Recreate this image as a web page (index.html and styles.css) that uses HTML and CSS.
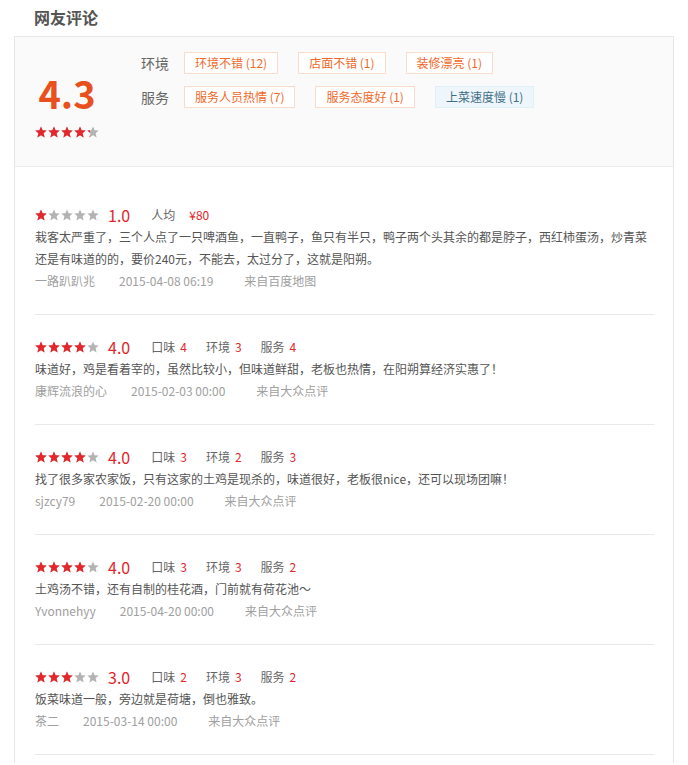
FILE: index.html
```html
<!DOCTYPE html>
<html lang="zh-CN">
<head>
  <meta charset="UTF-8" />
  <title>网友评论</title>
  <link rel="stylesheet" href="styles.css">
</head>
<body>
  <h2 class="section-title">网友评论</h2>

  <div class="review-box">
    <div class="summary">
      <div class="score-col">
        <div class="score-big">4.3</div>
        <div class="stars-holder" data-score="4.3"></div>
      </div>
      <div class="tag-rows">
        <div class="tag-row">
          <span class="tag-label">环境</span>
          <span class="tag">环境不错 (12)</span>
          <span class="tag">店面不错 (1)</span>
          <span class="tag">装修漂亮 (1)</span>
        </div>
        <div class="tag-row">
          <span class="tag-label">服务</span>
          <span class="tag">服务人员热情 (7)</span>
          <span class="tag">服务态度好 (1)</span>
          <span class="tag tag-bad">上菜速度慢 (1)</span>
        </div>
      </div>
    </div>

    <ul class="review-list" id="review-list">
      <!-- JS로 채움 -->
    </ul>
  </div>

  <script>
    const reviews = [
      {
        score: 1.0, price: "¥80",
        text: "栽客太严重了，三个人点了一只啤酒鱼，一直鸭子，鱼只有半只，鸭子两个头其余的都是脖子，西红柿蛋汤，炒青菜还是有味道的的，要价240元，不能去，太过分了，这就是阳朔。",
        user: "一路趴趴兆", time: "2015-04-08 06:19", from: "来自百度地图"
      },
      {
        score: 4.0, taste: 4, env: 3, service: 4,
        text: "味道好，鸡是看着宰的，虽然比较小，但味道鲜甜，老板也热情，在阳朔算经济实惠了！",
        user: "康辉流浪的心", time: "2015-02-03 00:00", from: "来自大众点评"
      },
      {
        score: 4.0, taste: 3, env: 2, service: 3,
        text: "找了很多家农家饭，只有这家的土鸡是现杀的，味道很好，老板很nice，还可以现场团嘛！",
        user: "sjzcy79", time: "2015-02-20 00:00", from: "来自大众点评"
      },
      {
        score: 4.0, taste: 3, env: 3, service: 2,
        text: "土鸡汤不错，还有自制的桂花酒，门前就有荷花池～",
        user: "Yvonnehyy", time: "2015-04-20 00:00", from: "来自大众点评"
      },
      {
        score: 3.0, taste: 2, env: 3, service: 2,
        text: "饭菜味道一般，旁边就是荷塘，倒也雅致。",
        user: "茶二", time: "2015-03-14 00:00", from: "来自大众点评"
      }
    ];

    const starSvg = '<svg class="star" viewBox="0 0 12 12"><polygon points="6,0.4 7.6,4.2 11.7,4.5 8.6,7.2 9.6,11.4 6,9.2 2.4,11.4 3.4,7.2 0.3,4.5 4.4,4.2"/></svg>';

    function starsHtml(score) {
      const five = starSvg.repeat(5);
      return `<span class="stars"><span class="stars-off">${five}</span>` +
        `<span class="stars-on" style="width:${score / 5 * 100}%">${five}</span></span>`;
    }

    document.querySelectorAll(".stars-holder").forEach(el => {
      el.innerHTML = starsHtml(parseFloat(el.dataset.score));
    });

    const list = document.getElementById("review-list");
    reviews.forEach(r => {
      let extra = "";
      if (r.price) {
        extra = `<span class="sub">人均<em class="price">${r.price}</em></span>`;
      } else {
        extra = `<span class="sub">口味<em>${r.taste}</em></span>` +
          `<span class="sub">环境<em>${r.env}</em></span>` +
          `<span class="sub">服务<em>${r.service}</em></span>`;
      }
      const li = document.createElement("li");
      li.className = "review-item";
      li.innerHTML = `
        <div class="score-row">${starsHtml(r.score)}<span class="score">${r.score.toFixed(1)}</span>${extra}</div>
        <p class="review-text">${r.text}</p>
        <div class="meta"><span>${r.user}</span><span class="time">${r.time}</span><span>${r.from}</span></div>
      `;
      list.appendChild(li);
    });
  </script>
</body>
</html>
```

FILE: styles.css
```css
body {
  font-family: 'Noto Sans CJK SC', 'Liberation Sans', sans-serif;
  background-color: #fff;
  color: #555;
  margin: 0;
}

.section-title {
  margin: 0 0 9px;
  padding: 7px 0 0 34px;
  font-size: 16px;
  line-height: 20px;
  font-weight: bold;
  color: #555;
}

.review-box {
  margin: 0 14px;
  border: 1px solid #e6e6e6;
  border-bottom: none;
}

/* 상단 요약 */
.summary {
  display: flex;
  background-color: #fafafa;
  border-bottom: 1px solid #ebebeb;
  padding: 15px 20px 28px;
}

.score-col {
  width: 64px;
  margin-top: 21px;
  margin-right: 42px;
  text-align: center;
}

.score-big {
  font-size: 38px;
  line-height: 40px;
  font-weight: bold;
  color: #e8501e;
}

.stars-holder {
  margin-top: 13px;
  height: 12px;
  line-height: 0;
}

.tag-rows {
  display: flex;
  flex-direction: column;
  gap: 12px;
}

.tag-row {
  display: flex;
  align-items: center;
  height: 22px;
}

.tag-label {
  font-size: 14px;
  color: #666;
  margin-right: 15px;
}

.tag {
  font-size: 12px;
  line-height: 20px;
  padding: 0 10px;
  border: 1px solid #f9dccb;
  background-color: #fff;
  color: #f0692a;
  margin-right: 20px;
}

.tag-bad {
  background-color: #eef6fb;
  border-color: #def0f8;
  color: #3f6e86;
}

/* 별점 */
.stars {
  position: relative;
  display: inline-block;
  width: 64px;
  height: 12px;
  line-height: 0;
  vertical-align: middle;
}

.stars-off,
.stars-on {
  display: flex;
  gap: 1px;
}

.stars-on {
  position: absolute;
  top: 0;
  left: 0;
  overflow: hidden;
}

.star {
  flex: none;
  width: 12px;
  height: 12px;
}

.stars-off .star {
  fill: #b3b3b3;
}

.stars-on .star {
  fill: #e5262b;
}

/* 리뷰 목록 */
.review-list {
  list-style: none;
  margin: 0;
  padding: 16px 19px 8px 20px;
}

.review-item {
  padding: 21px 0 22px;
  border-bottom: 1px solid #e8e8e8;
  line-height: 22px;
  font-size: 12px;
}

.score-row {
  display: flex;
  align-items: center;
  height: 22px;
  color: #666;
}

.score {
  font-size: 16px;
  color: #e3262b;
  margin: 0 21px 0 9px;
}

.sub {
  margin-right: 19px;
}

.sub em {
  font-style: normal;
  color: #e3262b;
  margin-left: 5px;
}

.sub em.price {
  margin-left: 14px;
}

.review-text {
  margin: 0;
  color: #555;
}

.meta {
  color: #a0a0a0;
}

.meta span {
  margin-right: 24px;
}

.meta .time {
  margin-right: 31px;
}
```
